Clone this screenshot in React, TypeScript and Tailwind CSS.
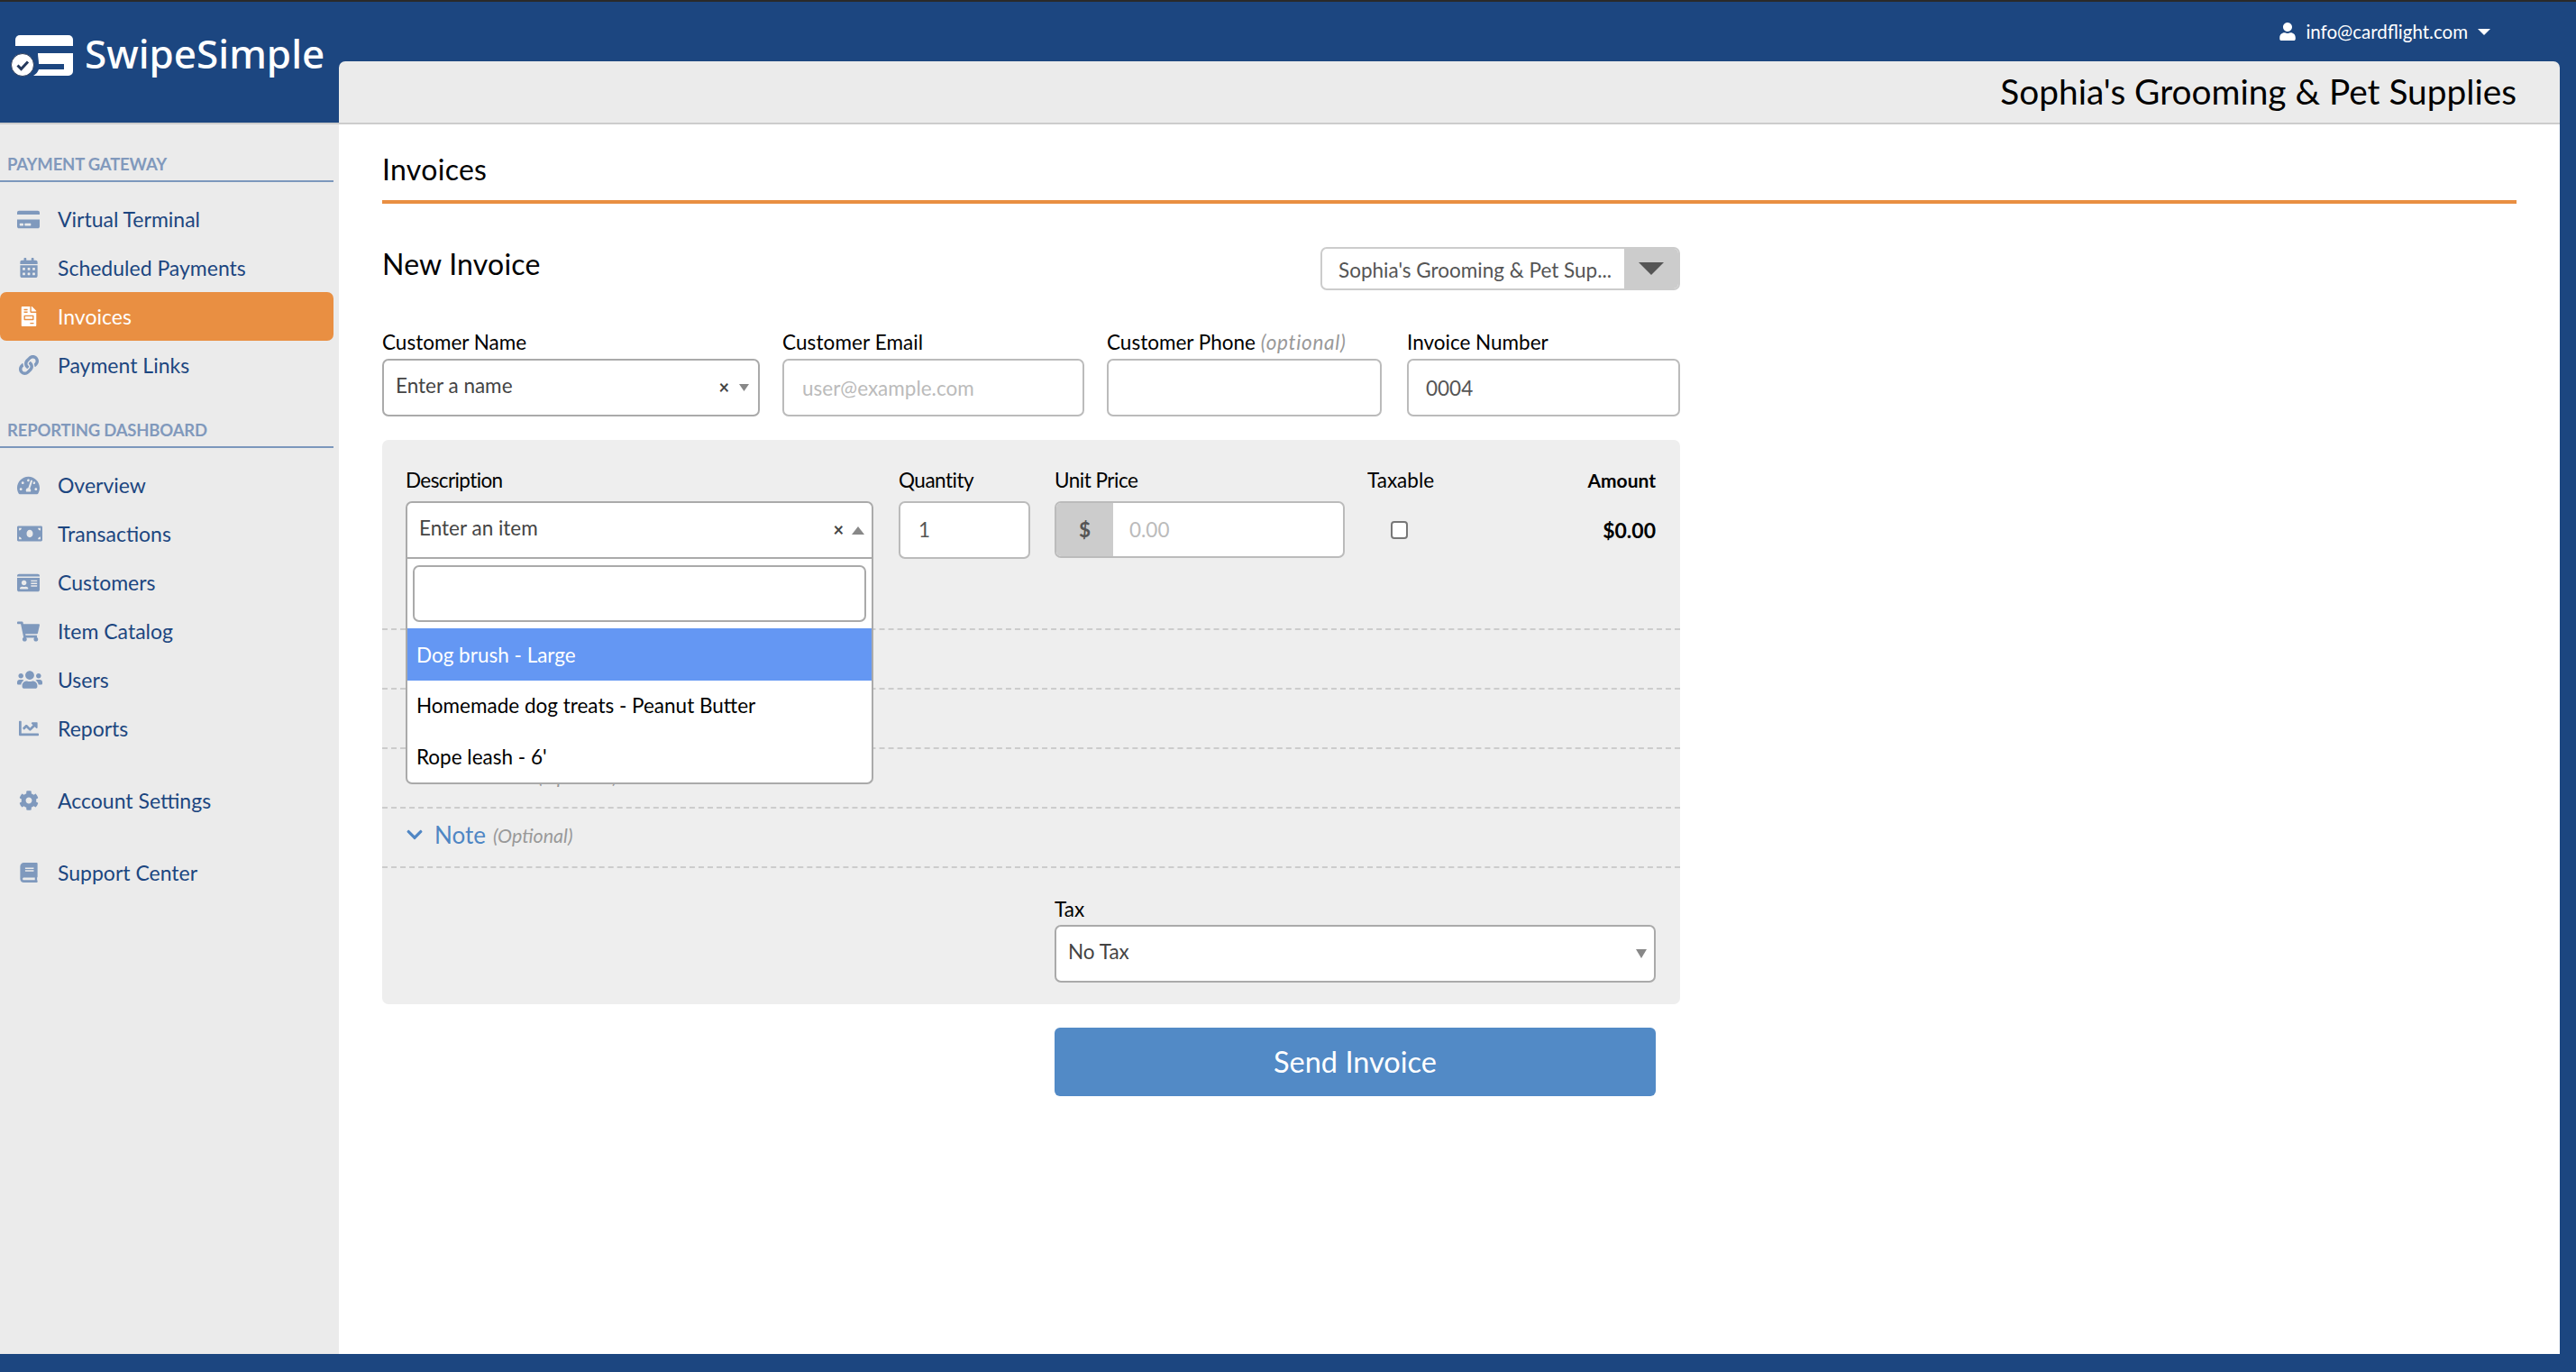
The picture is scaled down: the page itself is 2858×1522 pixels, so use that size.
import React from 'react';
import {
  FaBook,
  FaCalendarAlt,
  FaChartLine,
  FaChevronDown,
  FaCog,
  FaCreditCard,
  FaFileInvoice,
  FaIdCard,
  FaLink,
  FaMoneyBill,
  FaShoppingCart,
  FaTachometerAlt,
  FaUser,
  FaUsers,
} from 'react-icons/fa';

const Caret: React.FC<{ up?: boolean; className?: string }> = ({ up, className }) => (
  <svg viewBox="0 0 10 8" preserveAspectRatio="none" className={className} fill="currentColor">
    <polygon points={up ? '5,0 10,8 0,8' : '0,0 10,0 5,8'} />
  </svg>
);

const Logo = () => (
  <svg viewBox="0 0 72 50" className="w-[72px] h-[50px] shrink-0">
    <path d="M5 13V6a5 5 0 0 1 5-5h54a5 5 0 0 1 5 5v7z" fill="#fff" />
    <path d="M30 21h39v20a5 5 0 0 1-5 5H25c3-2 5-4 6-7h28v-6H31c0-4-1-8-1-12z" fill="#fff" />
    <circle cx="13" cy="34" r="12.5" fill="#fff" stroke="#33415c" strokeWidth="1" />
    <path d="M7.5 34.5l4 4 7.5-8" fill="none" stroke="#25395c" strokeWidth="3" />
  </svg>
);

type NavItem = {
  label: string;
  icon: React.ReactNode;
  active?: boolean;
};

const NavRow: React.FC<NavItem> = ({ label, icon, active }) => (
  <div
    className={`flex items-center h-[54px] w-[370px] rounded-[7px] ${
      active ? 'bg-[#e98f42] text-white' : 'text-[#1c4680]'
    }`}
  >
    <span className={`w-[25px] ml-[19px] shrink-0 flex justify-center ${active ? 'text-white' : 'text-[#7f99bd]'}`}>
      {icon}
    </span>
    <span className="ml-[20px] pt-[1px] text-[23px] leading-none">{label}</span>
  </div>
);

const SectionHead: React.FC<{ title: string }> = ({ title }) => (
  <div className="w-[370px] h-[32px] border-b-2 border-[#7c97bc] pl-[8px] text-[18.5px] leading-[24px] font-bold tracking-[-0.2px] text-[#8199bc]">
    {title}
  </div>
);

const Field: React.FC<{ label: React.ReactNode; className?: string; children: React.ReactNode }> = ({
  label,
  className,
  children,
}) => (
  <div className={className}>
    <div className="h-[24px] mb-[6px] text-[22.5px] leading-[24px] text-black">{label}</div>
    {children}
  </div>
);

const inputBox = 'h-[64px] bg-white border-2 border-[#bbbbbb] rounded-[7px] flex items-center text-[22.5px]';
const selectBox = 'h-[64px] bg-white border-2 border-[#aaaaaa] rounded-[7px] flex items-center text-[22.5px] text-[#444444]';

const FoldRow: React.FC<{ label?: string; indent?: boolean }> = ({ label, indent }) => (
  <div className={`h-[66px] border-t-2 border-dashed border-[#cccccc] flex items-center ${indent ? 'pl-[173px]' : 'pl-[26px]'}`}>
    {label && (
      <>
        <FaChevronDown size={20} className="text-[#4f86c4] -mt-[6px]" />
        <span className="ml-[12px] mr-[8px] -mt-[5px] text-[26px] text-[#4f86c4]">{label}</span>
      </>
    )}
    {(label || indent) && <span className="-mt-[3px] text-[21.5px] italic text-[#999999]">(Optional)</span>}
  </div>
);

export default function App() {
  return (
    <div className="w-[2858px] h-[1522px] overflow-hidden bg-[#1c4680] border-t-2 border-[#2a2a2a] flex flex-col font-['Lato',sans-serif]">
      {/* top bar */}
      <header className="flex h-[134px] shrink-0">
        <div className="w-[376px] shrink-0 flex items-start pl-[12px] pt-[36px]">
          <Logo />
          <span className="ml-[10px] -mt-[2px] text-[44px] leading-[46px] font-medium text-white font-['Noto_Sans',sans-serif]">
            SwipeSimple
          </span>
        </div>
        <div className="flex-1 flex flex-col mr-[18px]">
          <div className="h-[66px] flex justify-end items-start pt-[20px] pr-[77px] text-white">
            <FaUser size={20} className="mt-[3px]" />
            <span className="ml-[10px] text-[20.5px] leading-[26px]">info@cardflight.com</span>
            <Caret className="w-[14px] h-[7px] ml-[11px] mt-[10px]" />
          </div>
          <div className="h-[68px] bg-[#ebebeb] rounded-t-[7px] flex items-center justify-end pr-[48px] pb-[2px] text-[38.8px] text-black">
            Sophia's Grooming &amp; Pet Supplies
          </div>
        </div>
      </header>

      <div className="flex h-[1366px] shrink-0 border-t-2 border-[#cccccc] mr-[18px]">
        {/* sidebar */}
        <aside className="w-[376px] shrink-0 bg-[#ebebeb] pt-[32px]">
          <SectionHead title="PAYMENT GATEWAY" />
          <div className="mt-[14px] flex flex-col">
            <NavRow label="Virtual Terminal" icon={<FaCreditCard size={25} />} />
            <NavRow label="Scheduled Payments" icon={<FaCalendarAlt size={22} />} />
            <NavRow label="Invoices" icon={<FaFileInvoice size={22} />} active />
            <NavRow label="Payment Links" icon={<FaLink size={22} />} />
          </div>
          <div className="mt-[33px]">
            <SectionHead title="REPORTING DASHBOARD" />
          </div>
          <div className="mt-[14px] flex flex-col">
            <NavRow label="Overview" icon={<FaTachometerAlt size={25} />} />
            <NavRow label="Transactions" icon={<FaMoneyBill size={28} className="shrink-0 ml-[3px]" />} />
            <NavRow label="Customers" icon={<FaIdCard size={25} />} />
            <NavRow label="Item Catalog" icon={<FaShoppingCart size={25} />} />
            <NavRow label="Users" icon={<FaUsers size={28} className="shrink-0 ml-[3px]" />} />
            <NavRow label="Reports" icon={<FaChartLine size={22} />} />
            <div className="mt-[26px]">
              <NavRow label="Account Settings" icon={<FaCog size={22} />} />
            </div>
            <div className="mt-[26px]">
              <NavRow label="Support Center" icon={<FaBook size={22} />} />
            </div>
          </div>
        </aside>

        {/* main */}
        <main className="flex-1 bg-white px-[48px]">
          <div className="h-[88px] border-b-4 border-[#e98f42] pt-[30px] text-[32px] leading-[40px] tracking-[0.3px] text-black">
            Invoices
          </div>

          <div className="w-[1440px]">
            <div className="mt-[48px] h-[48px] flex justify-between items-start">
              <div className="text-[32px] leading-[38px] tracking-[0.2px] text-black">New Invoice</div>
              <div className="w-[399px] h-[48px] flex border-2 border-[#cccccc] rounded-[7px] overflow-hidden bg-white">
                <div className="flex-1 pl-[18px] pt-[4px] flex items-center text-[22.5px] text-[#555555] whitespace-nowrap">
                  Sophia's Grooming &amp; Pet Sup...
                </div>
                <div className="w-[60px] bg-[#cccccc] flex items-center justify-center">
                  <Caret className="w-[28px] h-[14px] text-[#555555]" />
                </div>
              </div>
            </div>

            <div className="mt-[46px] flex">
              <Field label="Customer Name" className="w-[419px]">
                <div className={`${selectBox} pl-[13px] pr-[10px]`}>
                  <span className="flex-1 -mt-[4px]">Enter a name</span>
                  <span className="text-[20px] font-bold -mt-[3px]">×</span>
                  <Caret className="w-[11px] h-[8px] ml-[11px] text-[#888888]" />
                </div>
              </Field>
              <Field label={<span className="tracking-[0.1px]">Customer Email</span>} className="w-[335px] ml-[25px]">
                <div className={`${inputBox} pl-[20px] pt-[2px] text-[#bbbbbb]`}>user@example.com</div>
              </Field>
              <Field
                label={
                  <>
                    Customer Phone <span className="italic tracking-[0.7px] text-[#999999]">(optional)</span>
                  </>
                }
                className="w-[305px] ml-[25px]"
              >
                <div className={inputBox} />
              </Field>
              <Field label="Invoice Number" className="w-[303px] ml-[28px]">
                <div className={`${inputBox} pl-[19px] pt-[2px] text-[#555555]`}>0004</div>
              </Field>
            </div>

            {/* line items panel */}
            <div className="mt-[26px] h-[626px] bg-[#eeeeee] rounded-[7px]">
              <div className="h-[209px] pt-[33px] pl-[26px] flex items-start">
                <Field label={<span className="tracking-[-0.6px]">Description</span>} className="w-[519px]">
                  <div className="relative pt-[5px]">
                    <div className={`${selectBox} h-[63px] rounded-b-none pl-[13px] pr-[8px]`}>
                      <span className="flex-1 -mt-[4px]">Enter an item</span>
                      <span className="text-[20px] font-bold -mt-[3px]">×</span>
                      <Caret up className="w-[14px] h-[9px] ml-[9px] text-[#888888]" />
                    </div>
                    <div className="absolute left-0 right-0 top-full h-[250px] bg-white border-2 border-t-0 border-[#aaaaaa] rounded-b-[7px] text-[22.5px] text-black">
                      <div className="mx-[6px] mt-[7px] h-[63px] border-2 border-[#aaaaaa] rounded-[7px]" />
                      <div className="mt-[7px] h-[58px] bg-[#6497f3] text-white pl-[10px] flex items-center pt-[2px]">
                        Dog brush - Large
                      </div>
                      <div className="h-[57px] pl-[10px] pb-[2px] flex items-center">Homemade dog treats - Peanut Butter</div>
                      <div className="h-[56px] pl-[10px] flex items-center">Rope leash - 6'</div>
                    </div>
                  </div>
                </Field>
                <Field label={<span className="tracking-[-0.5px]">Quantity</span>} className="w-[146px] ml-[28px]">
                  <div className="pt-[5px]">
                    <div className={`${inputBox} h-[63px] pl-[20px] text-[#555555]`}>1</div>
                  </div>
                </Field>
                <Field label={<span className="tracking-[-0.5px]">Unit Price</span>} className="w-[322px] ml-[27px]">
                  <div className="pt-[5px]">
                    <div className="h-[63px] flex bg-white border-2 border-[#bbbbbb] rounded-[7px] overflow-hidden text-[22.5px]">
                      <div className="w-[63px] bg-[#cccccc] flex items-center justify-center font-bold text-[#555555]">$</div>
                      <div className="flex-1 pl-[18px] flex items-center text-[#bbbbbb]">0.00</div>
                    </div>
                  </div>
                </Field>
                <Field label="Taxable" className="w-[100px] ml-[25px]">
                  <div className="pt-[27px] ml-[26px]">
                    <div className="w-[19px] h-[20px] bg-white border-2 border-[#777777] rounded-[4px]" />
                  </div>
                </Field>
                <div className="w-[220px] text-right text-black font-bold text-[21px] leading-[24px]">
                  <div className="h-[24px]">Amount</div>
                  <div className="mt-[31px] text-[23px]">$0.00</div>
                </div>
              </div>

              <FoldRow />
              <FoldRow />
              <FoldRow indent />
              <FoldRow label="Note" />

              <div className="border-t-2 border-dashed border-[#cccccc] pt-[34px] pl-[746px] pr-[27px]">
                <div className="h-[24px] mb-[5px] text-[22.5px] leading-[24px] text-black">Tax</div>
                <div className={`${selectBox} h-[63px] pl-[13px] pr-[8px] text-[#333333]`}>
                  <span className="flex-1 -mt-[4px]">No Tax</span>
                  <Caret className="w-[12px] h-[10px] text-[#888888]" />
                </div>
              </div>
            </div>

            <div className="mt-[26px] ml-[746px] w-[667px] h-[76px] bg-[#528ac6] rounded-[6px] flex items-center justify-center text-[32.5px] text-white">
              Send Invoice
            </div>
          </div>
        </main>
      </div>
    </div>
  );
}
